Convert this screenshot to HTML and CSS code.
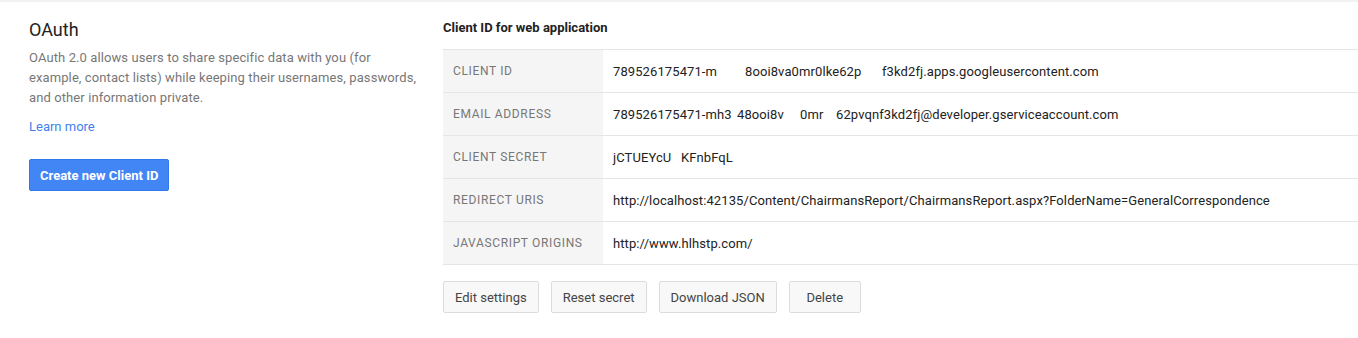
FILE: index.html
```html
<!DOCTYPE html>
<html>
<head>
<meta charset="utf-8">
<link rel="stylesheet" href="styles.css">
</head>
<body>
<div class="topbar"></div>
<div class="page">
  <section class="intro">
    <h1 class="intro-title">OAuth</h1>
    <p class="intro-text">OAuth 2.0 allows users to share specific data with you (for example, contact lists) while keeping their usernames, passwords, and other information private.</p>
    <a class="intro-link" href="#">Learn more</a>
    <div class="intro-actions">
      <button class="btn-primary">Create new Client ID</button>
    </div>
  </section>
  <section class="client">
    <h2 class="client-title">Client ID for web application</h2>
    <div class="client-table">
      <div class="row">
        <div class="label">CLIENT ID</div>
        <div class="value"><span class="seg seg-a">789526175471-m</span><span class="seg seg-b">8ooi8va0mr0lke62p</span><span class="seg">f3kd2fj.apps.googleusercontent.com</span></div>
      </div>
      <div class="row">
        <div class="label">EMAIL ADDRESS</div>
        <div class="value"><span class="seg seg-c">789526175471-mh3</span><span class="seg seg-d">48ooi8v</span><span class="seg seg-e">0mr</span><span class="seg">62pvqnf3kd2fj@developer.gserviceaccount.com</span></div>
      </div>
      <div class="row">
        <div class="label">CLIENT SECRET</div>
        <div class="value"><span class="seg seg-f">jCTUEYcU</span><span class="seg">KFnbFqL</span></div>
      </div>
      <div class="row">
        <div class="label">REDIRECT URIS</div>
        <div class="value">http://localhost:42135/Content/ChairmansReport/ChairmansReport.aspx?FolderName=GeneralCorrespondence</div>
      </div>
      <div class="row">
        <div class="label">JAVASCRIPT ORIGINS</div>
        <div class="value">http://www.hlhstp.com/</div>
      </div>
    </div>
    <div class="client-actions">
      <button class="btn">Edit settings</button>
      <button class="btn">Reset secret</button>
      <button class="btn">Download JSON</button>
      <button class="btn">Delete</button>
    </div>
  </section>
</div>
</body>
</html>
```

FILE: styles.css
```css
html, body {
  margin: 0;
  padding: 0;
  background: #fff;
}
body {
  font-family: Roboto, "Liberation Sans", Arial, sans-serif;
  font-size: 13px;
  color: #222;
}
.topbar {
  height: 2px;
  background: #f1f1f1;
}
.page {
  display: flex;
  padding-top: 16px;
  padding-left: 29px;
}
.intro {
  width: 390px;
  margin-right: 24px;
  flex: none;
}
.intro-title {
  margin: 0;
  font-size: 18px;
  line-height: 24px;
  font-weight: normal;
  color: #222;
}
.intro-text {
  margin: 6px 0 0;
  font-size: 13px;
  line-height: 20px;
  color: #777;
  letter-spacing: 0.1px;
}
.intro-link {
  display: block;
  margin-top: 9px;
  line-height: 20px;
  color: #427fed;
  text-decoration: none;
}
.intro-actions {
  margin-top: 22px;
}
.btn-primary {
  height: 32px;
  padding: 0 10px;
  border: 1px solid #3079ed;
  border-radius: 2px;
  background: #4285f4;
  color: #fff;
  font-family: inherit;
  font-size: 13px;
  font-weight: bold;
}
.client {
  flex: 1;
}
.client-title {
  margin: 0;
  font-size: 13px;
  line-height: 20px;
  font-weight: bold;
  color: #222;
}
.client-table {
  margin-top: 11px;
  border-top: 1px solid #e5e5e5;
}
.row {
  display: grid;
  grid-template-columns: 160px 1fr;
  height: 42px;
  border-bottom: 1px solid #e5e5e5;
}
.label {
  display: flex;
  align-items: center;
  padding-left: 10px;
  background: #f5f5f5;
  color: #777;
  font-size: 12px;
  letter-spacing: 0.65px;
}
.value {
  display: flex;
  align-items: center;
  padding-left: 10px;
  color: #222;
  white-space: nowrap;
  letter-spacing: 0.1px;
}
.seg-a { width: 132px; }
.seg-b { width: 137px; }
.seg-c { width: 124px; }
.seg-d { width: 63px; }
.seg-e { width: 36px; }
.seg-f { width: 68px; }
.client-actions {
  display: flex;
  gap: 12px;
  margin-top: 16px;
}
.btn {
  height: 32px;
  min-width: 72px;
  padding: 0 11px;
  border: 1px solid #dcdcdc;
  border-radius: 2px;
  background: #f8f8f8;
  color: #444;
  font-family: inherit;
  font-size: 13px;
}
```
